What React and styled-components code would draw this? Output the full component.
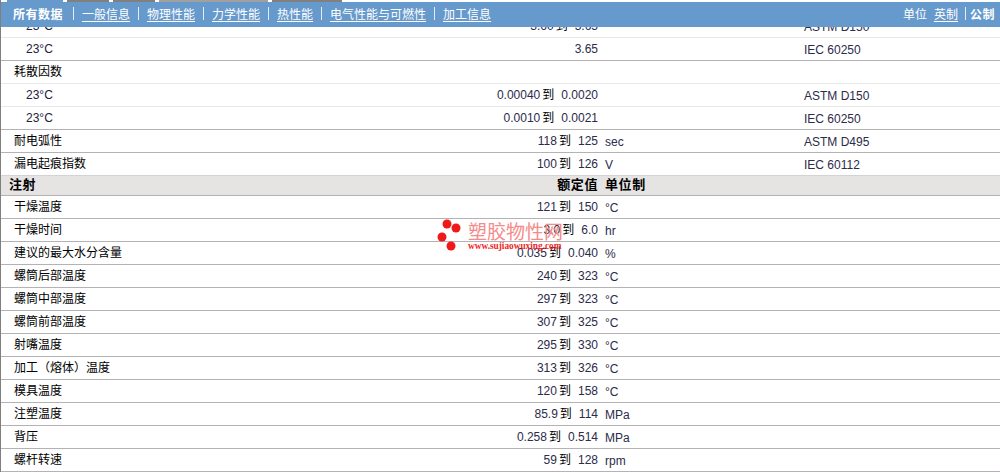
import React from 'react';
import styled, { createGlobalStyle } from 'styled-components';

const GlobalStyle = createGlobalStyle`
  html, body {
    margin: 0;
    padding: 0;
    background: #fff;
    overflow: hidden;
  }
  body {
    font-family: "Liberation Sans", "Noto Sans CJK SC", sans-serif;
    font-size: 12px;
    color: #000;
  }
`;

const Page = styled.div`
  position: relative;
  width: 1000px;
  height: 472px;
  overflow: hidden;
  border-left: 1px solid #7f7f7f;
  box-sizing: border-box;
`;

const TabStrip = styled.div`
  display: flex;
  height: 2px;
  margin-left: 6px;
  gap: 4px;
`;

const TabSliver = styled.div`
  width: ${props => props.w}px;
  background: ${props => props.color};
`;

const NavBar = styled.div`
  position: relative;
  z-index: 1;
  display: flex;
  justify-content: space-between;
  align-items: center;
  height: 23px;
  background: #6699cc;
  margin-left: -1px;
  padding: 0 5px 2px 13px;
  color: #fff;
  font-size: 12px;
`;

const NavGroup = styled.div`
  display: flex;
  align-items: center;
`;

const NavLink = styled.span`
  color: #fff;
  text-decoration: ${props => props.current ? 'none' : 'underline'};
  text-underline-offset: 2px;
  font-weight: ${props => props.current ? 700 : 400};
  letter-spacing: ${props => props.current ? '0.5px' : '0'};
`;

const UnitLabel = styled.span`
  margin-right: 7px;
`;

const NavDivider = styled.span`
  width: 1px;
  height: 13px;
  background: #e4edf6;
  margin: 0 ${props => props.tight ? 4 : 8}px 0 ${props => props.wide ? 10 : props.tight ? 7 : 8}px;
`;

const Rows = styled.div`
  display: flex;
  flex-direction: column;
  margin-top: -12px;
`;

const Row = styled.div`
  display: grid;
  grid-template-columns: 400px 197px 206px 1fr;
  height: 22px;
  line-height: 23px;
  border-bottom: 1px solid ${props => props.line};
  color: #2b2b4a;
`;

const Label = styled.div`
  padding-left: ${props => props.indent ? 25 : 13}px;
  color: ${props => props.indent ? '#22223a' : '#000'};
`;

const Value = styled.div`
  text-align: right;
  white-space: nowrap;
  line-height: 22px;
`;

const To = styled.span`
  color: #000;
  margin: 0 7px 0 2px;
`;

const Unit = styled.div`
  padding-left: 7px;
  line-height: 24px;
`;

const Method = styled.div`
  line-height: 24px;
`;

const SectionRow = styled.div`
  display: grid;
  grid-template-columns: 400px 197px 1fr;
  height: 19px;
  line-height: 18px;
  background: #e6e3e3;
  border-bottom: 1px solid #b2b2b2;
  font-weight: 700;
  font-size: 13px;
  letter-spacing: 0.6px;
`;

const SectionTitle = styled.div`
  padding-left: 8px;
`;

const SectionValue = styled.div`
  text-align: right;
`;

const SectionUnit = styled.div`
  padding-left: 7px;
`;

const Watermark = styled.div`
  position: absolute;
  left: 436px;
  top: 218px;
  width: 130px;
  height: 36px;
  pointer-events: none;
`;

const Mark = styled.div`
  position: absolute;
  left: 31px;
  top: 3px;
  color: #f58a8a;
  font-size: 19px;
  line-height: 24px;
  white-space: nowrap;
`;

const MarkUrl = styled.div`
  position: absolute;
  left: 31px;
  top: 24px;
  color: #f02828;
  font-family: "Liberation Serif", serif;
  font-size: 9.3px;
  font-weight: 700;
  line-height: 9px;
  white-space: nowrap;
`;

const strongLine = '#b4b2b4';
const lightLine = '#e8e8e8';

const topRows = [
  { label: '23°C', indent: true, low: '3.60', high: '3.65', method: 'ASTM D150', line: lightLine },
  { label: '23°C', indent: true, single: '3.65', method: 'IEC 60250', line: strongLine },
  { label: '耗散因数', line: lightLine },
  { label: '23°C', indent: true, low: '0.00040', high: '0.0020', method: 'ASTM D150', line: lightLine },
  { label: '23°C', indent: true, low: '0.0010', high: '0.0021', method: 'IEC 60250', line: strongLine },
  { label: '耐电弧性', low: '118', high: '125', unit: 'sec', method: 'ASTM D495', line: strongLine },
  { label: '漏电起痕指数', low: '100', high: '126', unit: 'V', method: 'IEC 60112', line: '#d4d2d2' },
];

const injectionRows = [
  { label: '干燥温度', low: '121', high: '150', unit: '°C' },
  { label: '干燥时间', low: '3.0', high: '6.0', unit: 'hr' },
  { label: '建议的最大水分含量', low: '0.035', high: '0.040', unit: '%' },
  { label: '螺筒后部温度', low: '240', high: '323', unit: '°C' },
  { label: '螺筒中部温度', low: '297', high: '323', unit: '°C' },
  { label: '螺筒前部温度', low: '307', high: '325', unit: '°C' },
  { label: '射嘴温度', low: '295', high: '330', unit: '°C' },
  { label: '加工（熔体）温度', low: '313', high: '326', unit: '°C' },
  { label: '模具温度', low: '120', high: '158', unit: '°C' },
  { label: '注塑温度', low: '85.9', high: '114', unit: 'MPa' },
  { label: '背压', low: '0.258', high: '0.514', unit: 'MPa' },
  { label: '螺杆转速', low: '59', high: '128', unit: 'rpm' },
].map(row => ({ ...row, line: strongLine }));

const DataRow = ({ row }) => (
  <Row line={row.line}>
    <Label indent={row.indent}>{row.label}</Label>
    <Value>
      {row.single || (row.low && <>{row.low}<To>到</To>{row.high}</>)}
    </Value>
    <Unit>{row.unit}</Unit>
    <Method>{row.method}</Method>
  </Row>
);

const navItems = ['一般信息', '物理性能', '力学性能', '热性能', '电气性能与可燃性', '加工信息'];

export default function App() {
  return (
    <Page>
      <GlobalStyle />
      <TabStrip>
        <TabSliver w={56} color="#6699cc" />
        <TabSliver w={42} color="#808080" />
        <TabSliver w={42} color="#808080" />
        <TabSliver w={109} color="#a0a0a0" />
        <TabSliver w={70} color="#808080" />
      </TabStrip>
      <NavBar>
        <NavGroup>
          <NavLink current>所有数据</NavLink>
          {navItems.map((item, i) => (
            <React.Fragment key={item}>
              <NavDivider wide={i === 0} />
              <NavLink>{item}</NavLink>
            </React.Fragment>
          ))}
        </NavGroup>
        <NavGroup>
          <UnitLabel>单位</UnitLabel>
          <NavLink>英制</NavLink>
          <NavDivider tight />
          <NavLink current>公制</NavLink>
        </NavGroup>
      </NavBar>
      <Rows>
        {topRows.map((row, i) => <DataRow key={i} row={row} />)}
        <SectionRow>
          <SectionTitle>注射</SectionTitle>
          <SectionValue>额定值</SectionValue>
          <SectionUnit>单位制</SectionUnit>
        </SectionRow>
        {injectionRows.map(row => <DataRow key={row.label} row={row} />)}
      </Rows>
      <Watermark>
        <svg width="30" height="36" viewBox="0 0 30 36">
          <circle cx="10" cy="6" r="4.5" fill="#f01818" />
          <circle cx="19" cy="10" r="4.5" fill="#f01818" />
          <circle cx="5" cy="19" r="4.5" fill="#f01818" />
          <circle cx="14" cy="28" r="4.5" fill="#f01818" />
        </svg>
        <Mark>塑胶物性网</Mark>
        <MarkUrl>www.sujiaowuxing.com</MarkUrl>
      </Watermark>
    </Page>
  );
}
